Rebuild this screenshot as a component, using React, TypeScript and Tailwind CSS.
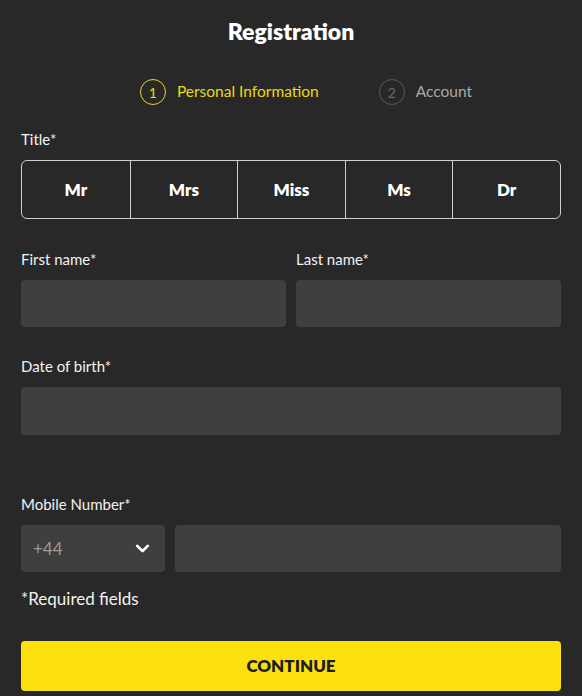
import { ChevronDown } from "lucide-react";

const titles = ["Mr", "Mrs", "Miss", "Ms", "Dr"];

const Label = ({ text, className = "" }: { text: string; className?: string }) => (
	<label className={`block text-[15px] leading-[20px] text-[#f2f2f2] ${className}`}>{text}</label>
);

const App = () => {
	return (
		<div
			className="min-h-[696px] w-full bg-[#282828] px-[21px] pt-[16px] pb-[5px] text-white"
			style={{ fontFamily: "Lato, 'Noto Sans', sans-serif" }}>
			{/* Heading */}
			<h1 className="text-center text-[23px] leading-[30px] font-extrabold">Registration</h1>

			{/* Stepper */}
			<div className="mt-[33px] flex justify-center gap-[60px] pl-[30px]">
				<div className="flex items-center gap-[11px]">
					<span className="flex h-[26px] w-[26px] items-center justify-center rounded-full border border-[#e8d81c] text-[14px] text-[#e8d81c]">
						1
					</span>
					<span className="text-[15.5px] text-[#e8d81c]">Personal Information</span>
				</div>
				<div className="flex items-center gap-[11px]">
					<span className="flex h-[26px] w-[26px] items-center justify-center rounded-full border border-[#5a5a5a] text-[14px] text-[#6a6a6a]">
						2
					</span>
					<span className="text-[15.5px] text-[#a8a8a8]">Account</span>
				</div>
			</div>

			{/* Title */}
			<Label text="Title*" className="mt-[24px]" />
			<div className="mt-[11px] grid h-[59px] grid-cols-5 overflow-hidden rounded-[6px] border-[1.5px] border-[#cfcfcf]">
				{titles.map((t, i) => (
					<button
						key={t}
						className={`flex items-center justify-center text-[17px] font-extrabold text-white ${
							i > 0 ? "border-l-[1.5px] border-[#cfcfcf]" : ""
						}`}>
						{t}
					</button>
				))}
			</div>

			{/* Names */}
			<div className="mt-[30px] grid grid-cols-2 gap-[10px]">
				<div>
					<Label text="First name*" />
					<input className="mt-[11px] h-[47px] w-full rounded-[4px] bg-[#3f3f3f] px-3 outline-none" />
				</div>
				<div>
					<Label text="Last name*" />
					<input className="mt-[11px] h-[47px] w-full rounded-[4px] bg-[#3f3f3f] px-3 outline-none" />
				</div>
			</div>

			{/* Date of birth */}
			<Label text="Date of birth*" className="mt-[29px]" />
			<input className="mt-[11px] h-[48px] w-full rounded-[4px] bg-[#3f3f3f] px-3 outline-none" />

			{/* Mobile */}
			<Label text="Mobile Number*" className="mt-[59px]" />
			<div className="mt-[11px] flex gap-[10px]">
				<div className="flex h-[47px] w-[144px] shrink-0 items-center justify-between rounded-[4px] bg-[#3f3f3f] pl-[12px] pr-[12px]">
					<span className="text-[17px] text-[#9a9a9a]">+44</span>
					<ChevronDown size={21} strokeWidth={3.2} className="text-white" />
				</div>
				<input className="h-[47px] flex-1 rounded-[4px] bg-[#3f3f3f] px-3 outline-none" />
			</div>

			<p className="mt-[15px] text-[17px] leading-[24px] text-[#f2f2f2]">*Required fields</p>

			{/* Continue */}
			<button className="mt-[30px] flex h-[50px] w-full items-center justify-center rounded-[4px] bg-[#fde10f] text-[17px] font-extrabold text-[#1e1e1e]">
				CONTINUE
			</button>
		</div>
	);
};

export default App;
